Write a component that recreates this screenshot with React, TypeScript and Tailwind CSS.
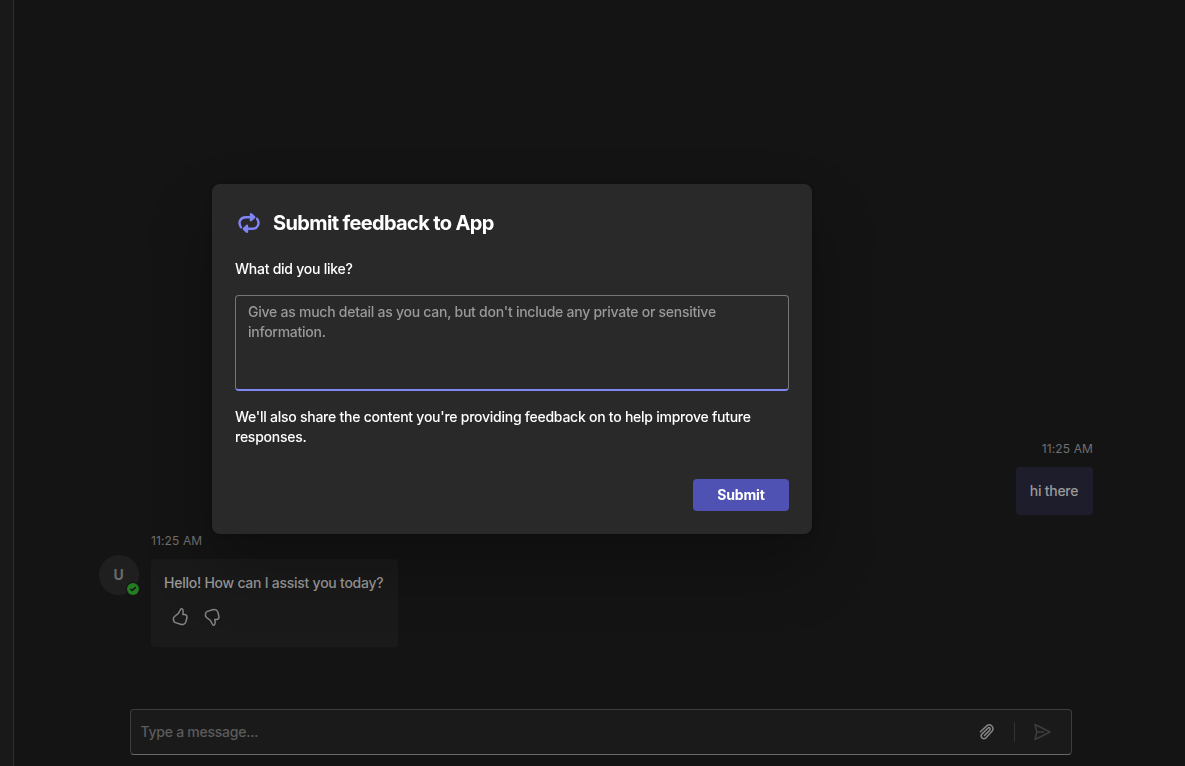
import React from "react";

function SyncIcon() {
  return (
    <svg width="22" height="22" viewBox="0 0 22 22" fill="none" stroke="#7f85f5" strokeWidth="2.4" strokeLinecap="round" strokeLinejoin="round">
      <path d="M3 15.3C-.2 10.5 2.2 5.2 7.6 5.2H14" />
      <path d="M19 6.7C22.2 11.5 19.8 16.8 14.4 16.8H8" />
      <path d="M13 2.2L16.2 5.2L13 8.2Z" fill="#7f85f5" />
      <path d="M9 13.8L5.8 16.8L9 19.8Z" fill="#7f85f5" />
    </svg>
  );
}

function ThumbIcon({ down = false }: { down?: boolean }) {
  return (
    <svg width="20" height="20" viewBox="0 0 20 20" fill="none" stroke="#858585" strokeWidth="1.5" strokeLinejoin="round" className={down ? "-scale-y-100" : ""}>
      <path d="M11.8 1.8C10.6 1.5 10.3 2.5 9.9 3.7C9.1 6 7.3 8 5 9.2C3.8 9.8 3.3 10.8 3.4 12L3.6 13.5C3.8 14.5 4.5 15.3 5.4 15.6L10.6 17.3C13.1 18.1 15.3 17 15.9 14.6L16.9 10.8C17.3 9 16.3 7.6 14.5 7.6H12.8C13.2 5.5 13.8 2.4 11.8 1.8Z" />
    </svg>
  );
}

function AttachIcon() {
  return (
    <svg width="20" height="20" viewBox="0 0 20 20" fill="none" stroke="#858585" strokeWidth="1.5" strokeLinecap="round" strokeLinejoin="round">
      <path d="M3.4 9.8L9.7 3.9C13.2.8 17.9 5.5 15 9.2L9 15.7C6.3 18.3 2.6 14.8 4.9 12.1L10.8 6.2C12.4 4.8 14 6.7 12.8 8.1L7.5 13.5" />
    </svg>
  );
}

function SendIcon() {
  return (
    <svg width="20" height="20" viewBox="0 0 20 20" fill="none" stroke="#3f3f3f" strokeWidth="1.4" strokeLinecap="round" strokeLinejoin="round">
      <path d="M3 2.5L18 10L3 17.5L4.8 10Z" />
      <path d="M4.8 10H11.8" />
    </svg>
  );
}

function FeedbackDialog() {
  return (
    <div className="fixed inset-0 flex items-start pt-[184px] pl-[212px]">
      <section role="dialog" className="flex h-[350px] w-[600px] flex-col rounded-lg bg-[#292929] px-[23px] pt-[25px] pb-[23px] text-white shadow-[0_0_8px_rgba(0,0,0,0.24),0_32px_64px_rgba(0,0,0,0.28)]">
        <header className="flex h-7 items-center gap-[13px] pl-[3px]">
          <SyncIcon />
          <h1 className="text-[20px] leading-7 font-bold tracking-[-0.63px]">Submit feedback to App</h1>
        </header>
        <p className="mt-[22px] text-sm leading-5">What did you like?</p>
        <textarea
          className="mt-4 h-24 w-full shrink-0 resize-none rounded border border-b-2 border-[#757575] border-b-[#7f85f5] bg-transparent px-3 py-1.5 text-sm leading-5 font-[450] tracking-[-0.25px] outline-none placeholder:text-[#999999]"
          placeholder="Give as much detail as you can, but don't include any private or sensitive information."
        />
        <p className="mt-4 text-sm leading-5">
          We'll also share the content you're providing feedback on to help improve future responses.
        </p>
        <button className="mt-auto h-8 w-24 self-end rounded bg-[#4f52b2] text-sm font-bold tracking-[-0.15px]">Submit</button>
      </section>
    </div>
  );
}

export default function App() {
  return (
    <div className="flex h-screen w-full overflow-hidden bg-[#141414] font-['Inter',sans-serif] font-[450] tracking-[-0.25px] text-[#999999]">
      <aside className="w-3.5 shrink-0 border-r border-[#2d2d2d] bg-[#191919]" />
      <main className="flex min-w-0 flex-1 flex-col">
        <div className="flex flex-1 flex-col justify-end pb-[62px]">
          <div className="mr-[92px] flex flex-col items-end">
            <time className="text-xs leading-4 font-normal tracking-[0.12px] text-[#707070]">11:25 AM</time>
            <p className="mt-2.5 flex h-12 w-[77px] items-center justify-center rounded bg-[#1e1d2b] pr-px text-sm leading-5">hi there</p>
          </div>
          <div className="mt-[18px] ml-[85px] flex gap-3">
            <div className="relative mt-[22px] flex size-10 items-center justify-center rounded-full bg-[#1f1f1f] text-sm font-bold text-[#696969]">
              <span className="-ml-px">U</span>
              <svg className="absolute -right-px -bottom-px" width="14" height="14" viewBox="0 0 14 14">
                <circle cx="7" cy="7" r="7" fill="#141414" />
                <circle cx="7" cy="7" r="6" fill="#237b22" />
                <path d="M4.7 7.2L6.2 8.5L9.3 5.6" fill="none" stroke="#141414" strokeWidth="1.5" strokeLinecap="round" strokeLinejoin="round" />
              </svg>
            </div>
            <div>
              <time className="block text-xs leading-4 font-normal tracking-[0.12px] text-[#707070]">11:25 AM</time>
              <div className="mt-2.5 h-[88px] w-[247px] rounded bg-[#1a1a1a] pt-3.5 pl-[13px]">
                <p className="text-sm leading-5 whitespace-nowrap">Hello! How can I assist you today?</p>
                <div className="mt-3.5 ml-1.5 flex gap-3">
                  <ThumbIcon />
                  <ThumbIcon down />
                </div>
              </div>
            </div>
          </div>
        </div>
        <div className="mb-[11px] ml-[116px] flex h-[46px] w-[942px] items-center rounded border border-[#3d3d3d] border-b-[#686868] bg-[#1a1a1a] pr-[19px] pl-[9.5px]">
          <span className="flex-1 text-sm leading-5 text-[#5c5c5c]">Type a message...</span>
          <AttachIcon />
          <span className="mr-[17px] ml-[17px] h-5 w-px bg-[#333333]" />
          <SendIcon />
        </div>
      </main>
      <FeedbackDialog />
    </div>
  );
}
